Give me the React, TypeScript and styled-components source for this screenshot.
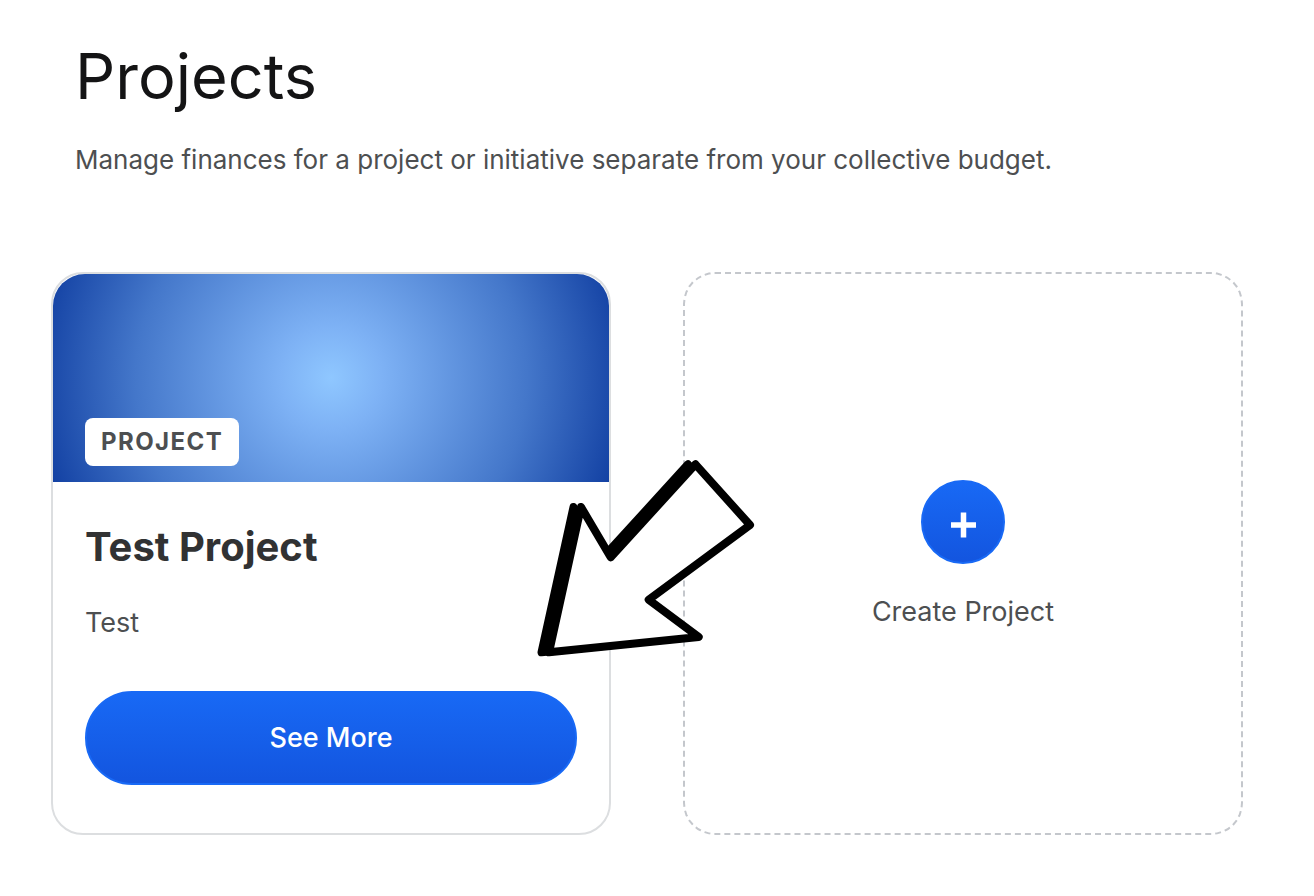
import React from "react";
import styled, { createGlobalStyle } from "styled-components";

const GlobalStyle = createGlobalStyle`
  *, *::before, *::after { box-sizing: border-box; }
  body {
    margin: 0;
    background: #ffffff;
    color: #4d4f51;
    font-family: Inter, "Liberation Sans", sans-serif;
    font-size: 27px;
    line-height: 40px;
  }
`;

const Page = styled.main`
  padding: 40px 71px 61px 51px;
`;

const Header = styled.header`
  padding: 0 24px;
  margin-bottom: 92px;
`;

const Title = styled.h1`
  margin: 0 0 28px;
  color: #141415;
  font-size: 63px;
  font-weight: 400;
  line-height: 72px;
`;

const Lead = styled.p`
  margin: 0;
  font-size: 26px;
`;

const Text = styled.p`
  margin: 0;
`;

const CardGrid = styled.section`
  position: relative;
  display: grid;
  grid-template-columns: 1fr 1fr;
  gap: 72px;
`;

const Card = styled.article`
  display: flex;
  flex-direction: column;
  border: 2px solid #dcdee0;
  border-radius: 32px;
`;

const Banner = styled.div`
  display: flex;
  align-items: flex-end;
  height: 208px;
  padding: 16px 32px;
  border-radius: 32px 32px 0 0;
  background: radial-gradient(
    circle,
    #8fc7ff 0%,
    #7eb2f5 17%,
    #4477ca 66%,
    #1341a3 100%
  );
`;

const Tag = styled.span`
  padding: 0 16px;
  border-radius: 8px;
  background: #ffffff;
  font-size: 24px;
  font-weight: 700;
  line-height: 48px;
  letter-spacing: 0.06em;
  text-transform: uppercase;
`;

const CardBody = styled.div`
  display: flex;
  flex-direction: column;
  padding: 40px 32px 48px;
`;

const CardTitle = styled.h2`
  margin: 0 0 31px;
  color: #313233;
  font-size: 40px;
  font-weight: 700;
  line-height: 50px;
`;

const PrimaryButton = styled.button`
  height: 94px;
  margin-top: 48px;
  border: 2px solid #1869f5;
  border-radius: 47px;
  background: linear-gradient(180deg, #1869f5 0%, #1355df 100%);
  color: #ffffff;
  font: inherit;
  font-weight: 500;
`;

const CreateCard = styled.button`
  display: flex;
  flex-direction: column;
  align-items: center;
  justify-content: center;
  gap: 28px;
  padding: 5px 0 0;
  border: 2px dashed #c4c7cc;
  border-radius: 32px;
  background: transparent;
  color: inherit;
  font: inherit;
`;

const PlusCircle = styled.span`
  display: flex;
  align-items: center;
  justify-content: center;
  width: 84px;
  height: 84px;
  border: 2px solid #1869f5;
  border-radius: 50%;
  background: linear-gradient(180deg, #1869f5 0%, #1355df 100%);
`;

const Arrow = styled.svg`
  position: absolute;
  top: 178px;
  left: calc(50% - 117px);
  pointer-events: none;
`;

const ARROW_POINTS =
  "51,57 80.7,107.3 165.5,14.3 220,75 118.7,149.7 168.7,187 19,202.3";

export default function App() {
  return (
    <Page>
      <GlobalStyle />
      <Header>
        <Title>Projects</Title>
        <Lead>
          Manage finances for a project or initiative separate from your
          collective budget.
        </Lead>
      </Header>
      <CardGrid>
        <Card>
          <Banner>
            <Tag>Project</Tag>
          </Banner>
          <CardBody>
            <CardTitle>Test Project</CardTitle>
            <Text>Test</Text>
            <PrimaryButton type="button">See More</PrimaryButton>
          </CardBody>
        </Card>
        <CreateCard type="button">
          <PlusCircle>
            <svg width="26" height="34" viewBox="0 0 26 34" aria-hidden="true">
              <path d="M13.5 7.5v25M1 20h25" stroke="#fff" strokeWidth="5.5" />
            </svg>
          </PlusCircle>
          Create Project
        </CreateCard>
        <Arrow
          width="236"
          height="212"
          viewBox="0 0 236 212"
          stroke="#000"
          strokeWidth="8"
          strokeLinejoin="round"
          aria-hidden="true"
        >
          <polygon points={ARROW_POINTS} transform="translate(-7.5 0)" />
          <polygon points={ARROW_POINTS} fill="#fff" />
        </Arrow>
      </CardGrid>
    </Page>
  );
}
